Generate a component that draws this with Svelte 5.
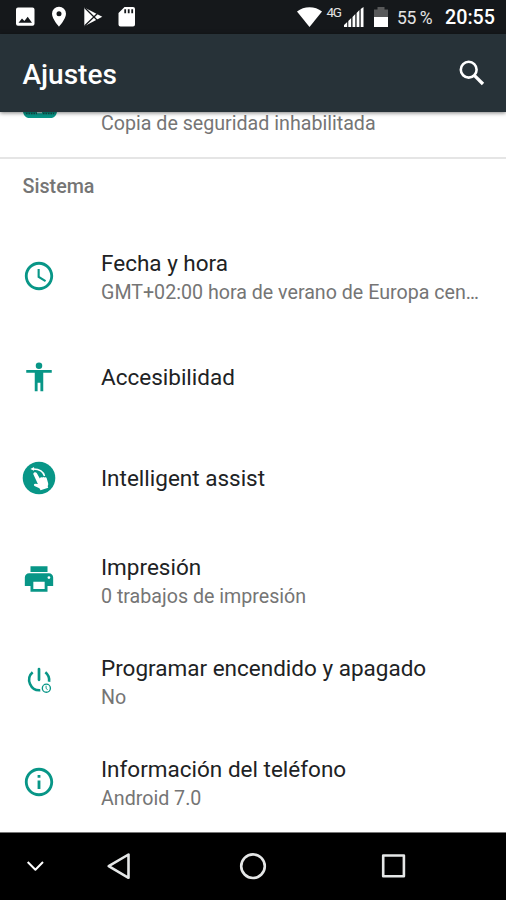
<script>
  const items = [
    { icon: 'clock', title: 'Fecha y hora', summary: 'GMT+02:00 hora de verano de Europa cen…' },
    { icon: 'access', title: 'Accesibilidad' },
    { icon: 'assist', title: 'Intelligent assist' },
    { icon: 'print', title: 'Impresión', summary: '0 trabajos de impresión' },
    { icon: 'power', title: 'Programar encendido y apagado', summary: 'No' },
    { icon: 'info', title: 'Información del teléfono', summary: 'Android 7.0' }
  ];
</script>

<div class="screen">
  <div class="status">
    <svg class="notifications" width="150" height="34" viewBox="0 0 150 34" fill="#fff">
      <path fill-rule="evenodd" d="M18 7.5h14.5a2 2 0 0 1 2 2v14.3a2 2 0 0 1-2 2H18a2 2 0 0 1-2-2V9.500a2 2 0 0 1 2-2zM18.500 22.800h13.500l-4.300-6-3.300 4.200-2.400-2.600z" />
      <path fill-rule="evenodd" d="M59 6.800a7 7 0 0 0-7 7c0 5.200 7 12.900 7 12.900s7-7.700 7-12.900a7 7 0 0 0-7-7zm0 4.500a2.500 2.500 0 1 1 0 5 2.500 2.500 0 0 1 0-5z" />
      <path d="M84.300 7.500v18.800L102.300 16.800z" />
      <path d="M84.500 7.500L98 21M84.500 26L98 13" fill="none" stroke="#15181b" stroke-width="1.300" />
      <path fill-rule="evenodd" d="M124.500 7h8.500a2 2 0 0 1 2 2v15.500a2 2 0 0 1-2 2h-12.500a2 2 0 0 1-2-2V13zM124.300 9.300v4h1.800v-4zm3.500 0v4h1.800v-4zm3.500 0v4h1.800v-4z" />
    </svg>
    <div class="indicators">
      <svg width="25" height="20" viewBox="0 0 25 20"><path d="M0 4.500C7-1.300 18-1.300 25 4.500L12.500 20z" fill="#fff" /></svg>
      <span class="network">4G</span>
      <svg class="signal" width="20" height="20" viewBox="0 0 20 20" fill="#fff">
        <path d="M0 20v-2l3.200-3v5zM4.300 20v-6l2.900-3v9zM8.500 20v-10l2.800-3v13zM12.600 20V6l2.800-3v17zM16.700 20V2L19.500 0v20z" />
      </svg>
      <svg class="battery" width="14" height="20" viewBox="0 0 14 20"><path d="M0 2.500h3.500V0h7v2.500H14V11H0z" fill="#58595a" /><path d="M0 10h14v10H0z" fill="#fff" /></svg>
      <span class="percent">55 %</span>
      <span class="time">20:55</span>
    </div>
  </div>

  <header>
    <h1>Ajustes</h1>
    <svg width="26" height="26" viewBox="0 0 26 26" fill="none" stroke="#fff" stroke-width="2.600"><circle cx="9.700" cy="9.700" r="7.900" /><path d="M15.300 15.300L24 24" stroke-width="3.300" /></svg>
  </header>

  <main>
    <div class="backup">
      <svg width="34" height="6" viewBox="0 0 34 6"><path d="M0 0h34c-1 4-3 6-7 6H7C3 6 1 4 0 0z" fill="#089687" /><path d="M3 1.500h11M20 1.500h11" stroke="#12544f" stroke-width="1.500" stroke-dasharray="1.500 1" /><path d="M14 .7h5" stroke="#d4e5e3" /></svg>
      <p class="summary">Copia de seguridad inhabilitada</p>
    </div>
    <h2>Sistema</h2>
    {#each items as item}
      <div class="row">
        <svg class="icon" width="34" height="34" viewBox="0 0 24 24" fill="#089687">
          {#if item.icon === 'clock'}
            <path d="M11.990 2C6.470 2 2 6.480 2 12s4.470 10 9.990 10C17.520 22 22 17.520 22 12S17.520 2 11.990 2zM12 20c-4.420 0-8-3.580-8-8s3.580-8 8-8 8 3.580 8 8-3.580 8-8 8zm.5-13H11v6l5.250 3.150.75-1.230-4.500-2.670z" />
          {:else if item.icon === 'access'}
            <path d="M12 1.700a2.300 2.300 0 1 1 0 4.600 2.300 2.300 0 0 1 0-4.600zM21 9h-6v13h-2v-6h-2v6H9V9H3V7h18z" />
          {:else if item.icon === 'assist'}
            <circle cx="12" cy="12" r="11.500" />
            <g fill="#fff"><path d="M8.600 8.100c.7-.4 1.500-.1 1.900.6l2.100 3.600c.3-.8 1-1 1.700-.6.4-.5 1.200-.5 1.600 0 .6-.4 1.400-.1 1.600.6l.9 3.200c.2.900.1 1.500-.3 2.200l.4 1.200-5.400 1.700-.8-1.300-3.500-1.700c-.8-.6-.3-1.500.5-1.500l1.900.2-3.100-6.700c-.3-.6-.1-1.200.5-1.500z" /><path d="M7.700 5.600c4.200-.1 7.300 1.500 8.200 5" fill="none" stroke="#fff" /><path d="M5.900 5.600l2.600-1.400v2.700z" /></g>
          {:else if item.icon === 'print'}
            <path fill-rule="evenodd" d="M19 8H5c-1.660 0-3 1.340-3 3v6h4v4h12v-4h4v-6c0-1.660-1.340-3-3-3zm-3 11H8v-5h8zm3-7a1 1 0 1 1 0-2 1 1 0 0 1 0 2zM18 3H6v4h12z" />
          {:else if item.icon === 'power'}
            <g fill="none" stroke="#089687"><path d="M12 4.300v7.600" stroke-width="1.900" stroke-linecap="round" /><path d="M7.500 6.500A7.300 7.300 0 0 0 12.900 19.200M16.500 6.500a7.300 7.300 0 0 1 2.600 6.700" stroke-width="1.800" /><circle cx="17.200" cy="17.800" r="2.850" stroke-width=".95" /><path d="M17 16v2l1.100.8" stroke-width=".65" /></g>
          {:else}
            <path d="M11 7h2v2h-2zm0 4h2v6h-2zm1-9C6.480 2 2 6.480 2 12s4.480 10 10 10 10-4.480 10-10S17.520 2 12 2zm0 18c-4.410 0-8-3.590-8-8s3.590-8 8-8 8 3.590 8 8-3.590 8-8 8z" />
          {/if}
        </svg>
        <div class="text" class:double={item.summary}>
          <p class="title">{item.title}</p>
          {#if item.summary}<p class="summary">{item.summary}</p>{/if}
        </div>
      </div>
    {/each}
  </main>

  <nav>
    <svg width="506" height="67" viewBox="0 1 506 67" fill="none" stroke="#e5e7e7" stroke-width="2.600" stroke-linejoin="round">
      <path d="M27.700 30l7.700 7.700L43 30" stroke="#fff" stroke-width="2" />
      <path d="M128.500 22.500v23.300L108.700 34.200z" />
      <circle cx="253" cy="34.200" r="11.800" />
      <path d="M383.200 23.500h20.700v20.700h-20.700z" />
    </svg>
  </nav>
</div>

<style>
  :global(body) { margin: 0; }
  .screen { width: 506px; height: 900px; display: flex; flex-direction: column; overflow: hidden; background: #fff; font-family: Roboto, sans-serif; }
  .status { height: 34px; flex: none; background: #15181b; display: flex; justify-content: space-between; color: #fff; }
  .indicators { display: flex; align-items: flex-start; padding: 6.500px 11px 0 0; }
  .network { font-size: 13.500px; line-height: 12px; letter-spacing: -1.300px; width: 17px; margin: -1px 0 0 4.500px; color: #e2e2e2; }
  .battery { margin-left: 10.500px; }
  .percent { font-size: 17.500px; line-height: 22px; margin-left: 9px; width: 48px; letter-spacing: -.4px; color: #e4e4e4; white-space: nowrap; }
  .time { font-size: 19.700px; font-weight: 500; line-height: 22px; width: 50px; }
  header { height: 78px; flex: none; background: #273238; display: flex; align-items: center; justify-content: space-between; padding: 0 21px 0 22.500px; box-sizing: border-box; color: #fff; box-shadow: 0 1px 4px rgba(0, 0, 0, .5); z-index: 1; }
  header svg { margin-top: -1px; }
  h1, h2, p { margin: 0; }
  h1 { font-size: 28px; font-weight: 500; line-height: 34px; margin-top: 3px; }
  main { height: 720px; flex: none; overflow: hidden; }
  .backup { height: 45px; display: flex; align-items: flex-start; padding-left: 22.500px; gap: 44.500px; border-bottom: 2px solid #e5e5e5; }
  .backup .summary { margin-top: -2px; }
  h2 { height: 66px; box-sizing: border-box; padding: 16px 22.500px 0; font-size: 19.700px; font-weight: 500; line-height: 24px; color: #757575; }
  .row { height: 101.200px; display: flex; align-items: center; padding: 0 22px; box-sizing: border-box; }
  .icon { flex: none; margin-right: 45px; }
  .text { min-width: 0; flex: 1; }
  .double { padding-top: 3px; }
  .double .summary { margin-top: 1px; }
  .title { font-size: 22.500px; line-height: 30px; color: #202224; }
  .summary { font-size: 19.650px; line-height: 27px; color: #757575; white-space: nowrap; }
  nav { height: 68px; box-sizing: border-box; flex: none; background: #000; border-top: 1px solid #777; }
  svg { display: block; }
</style>
